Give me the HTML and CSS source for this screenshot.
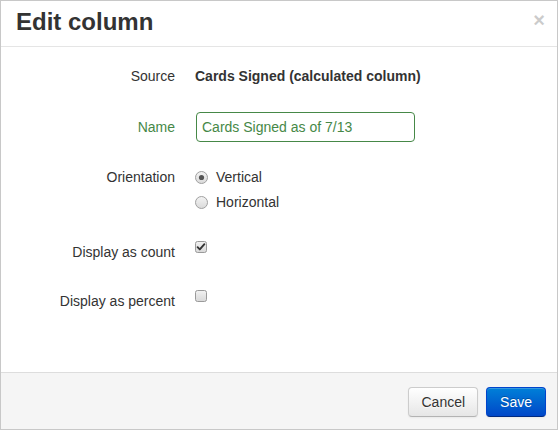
FILE: index.html
```html
<!DOCTYPE html>
<html>
<head>
<meta charset="utf-8">
<link rel="stylesheet" href="styles.css">
</head>
<body>
<div class="modal">
  <div class="modal-header">
    <h3 class="title">Edit column</h3>
    <span class="close">×</span>
  </div>
  <div class="modal-body">
    <div class="row row-source">
      <div class="label">Source</div>
      <div class="control"><strong>Cards Signed (calculated column)</strong></div>
    </div>
    <div class="row row-name">
      <div class="label label-success">Name</div>
      <div class="control"><input class="text-input" type="text" value="Cards Signed as of 7/13"></div>
    </div>
    <div class="row row-orientation">
      <div class="label">Orientation</div>
      <div class="control stack">
        <div class="option">
          <svg class="radio" width="13" height="13" viewBox="0 0 13 13">
            <defs><linearGradient id="rg" x1="0" y1="0" x2="0" y2="1"><stop offset="0" stop-color="#f4f4f4"/><stop offset="1" stop-color="#d9d9d9"/></linearGradient></defs>
            <circle cx="6.5" cy="6.5" r="6" fill="url(#rg)" stroke="#a0a0a0"/>
            <circle cx="6.5" cy="6.5" r="2.6" fill="#555"/>
          </svg>
          <span>Vertical</span>
        </div>
        <div class="option">
          <svg class="radio" width="13" height="13" viewBox="0 0 13 13">
            <circle cx="6.5" cy="6.5" r="6" fill="url(#rg)" stroke="#a0a0a0"/>
          </svg>
          <span>Horizontal</span>
        </div>
      </div>
    </div>
    <div class="row row-count">
      <div class="label">Display as count</div>
      <div class="control">
        <svg class="check" width="12" height="12" viewBox="0 0 12 12">
          <defs><linearGradient id="cg" x1="0" y1="0" x2="0" y2="1"><stop offset="0" stop-color="#f2f2f2"/><stop offset="1" stop-color="#d8d8d8"/></linearGradient></defs>
          <rect x="0.5" y="0.5" width="11" height="11" rx="2" fill="url(#cg)" stroke="#9a9a9a"/>
          <path d="M2.6 6.2 L4.8 8.4 L9.4 3.2" fill="none" stroke="#333" stroke-width="1.9" stroke-linecap="round" stroke-linejoin="round"/>
        </svg>
      </div>
    </div>
    <div class="row row-percent">
      <div class="label">Display as percent</div>
      <div class="control">
        <svg class="check" width="12" height="12" viewBox="0 0 12 12">
          <rect x="0.5" y="0.5" width="11" height="11" rx="2" fill="url(#cg)" stroke="#9a9a9a"/>
        </svg>
      </div>
    </div>
  </div>
  <div class="modal-footer">
    <button class="btn">Cancel</button>
    <button class="btn btn-primary">Save</button>
  </div>
</div>
</body>
</html>
```

FILE: styles.css
```css
html, body {
  margin: 0;
  padding: 0;
  background: #fff;
}
body {
  font-family: "Liberation Sans", Arial, sans-serif;
  font-size: 14px;
  line-height: 20px;
  color: #333;
}
.modal {
  box-sizing: border-box;
  width: 558px;
  height: 430px;
  border: 1px solid #c8c8c8;
  display: flex;
  flex-direction: column;
  background: #fff;
}
.modal-header {
  display: flex;
  justify-content: space-between;
  align-items: flex-start;
  padding: 6px 12px 9px 15px;
  border-bottom: 1px solid #e5e5e5;
}
.title {
  margin: 0;
  font-size: 24px;
  line-height: 30px;
  font-weight: bold;
  color: #333;
}
.close {
  font-size: 20px;
  font-weight: bold;
  line-height: 20px;
  color: #000;
  opacity: 0.2;
  margin-top: 3px;
}
.modal-body {
  flex: 1;
  padding-top: 19px;
}
.row {
  display: flex;
  align-items: flex-start;
}
.label {
  width: 174px;
  text-align: right;
  padding-right: 20px;
  flex: none;
}
.label-success {
  color: #468847;
}
.control strong {
  font-weight: bold;
  color: #333;
}
.row-name {
  margin-top: 26px;
}
.row-name .label {
  line-height: 30px;
}
.text-input {
  box-sizing: border-box;
  width: 219px;
  height: 30px;
  margin: 0 0 0 1px;
  padding: 0 5px;
  border: 1px solid #468847;
  border-radius: 4px;
  font-family: "Liberation Sans", Arial, sans-serif;
  font-size: 14px;
  color: #468847;
  outline: none;
}
.row-orientation {
  margin-top: 25px;
}
.stack {
  display: flex;
  flex-direction: column;
  gap: 5px;
}
.option {
  display: flex;
  align-items: center;
  height: 20px;
}
.radio {
  display: block;
  margin-right: 8px;
  margin-top: 1px;
}
.row-count {
  margin-top: 30px;
}
.row-percent {
  margin-top: 29px;
}
.check {
  display: block;
  margin-top: -1px;
}
.modal-footer {
  display: flex;
  justify-content: flex-end;
  gap: 8px;
  padding: 14px 11px 12px 0;
  background: #f5f5f5;
  border-top: 1px solid #dddddd;
}
.btn {
  box-sizing: border-box;
  height: 30px;
  padding: 0 12px;
  font-family: "Liberation Sans", Arial, sans-serif;
  font-size: 14px;
  line-height: 20px;
  color: #333;
  border: 1px solid #cccccc;
  border-bottom-color: #b3b3b3;
  border-radius: 4px;
  background: linear-gradient(#ffffff, #e6e6e6);
  box-shadow: inset 0 1px 0 rgba(255,255,255,.2), 0 1px 2px rgba(0,0,0,.05);
  text-shadow: 0 1px 1px rgba(255,255,255,.75);
}
.btn-primary {
  color: #fff;
  padding: 0 13px;
  border-color: #0044cc #0044cc #002a80;
  background: linear-gradient(#0080d8, #0047c8);
  text-shadow: 0 -1px 0 rgba(0,0,0,.25);
}
```
